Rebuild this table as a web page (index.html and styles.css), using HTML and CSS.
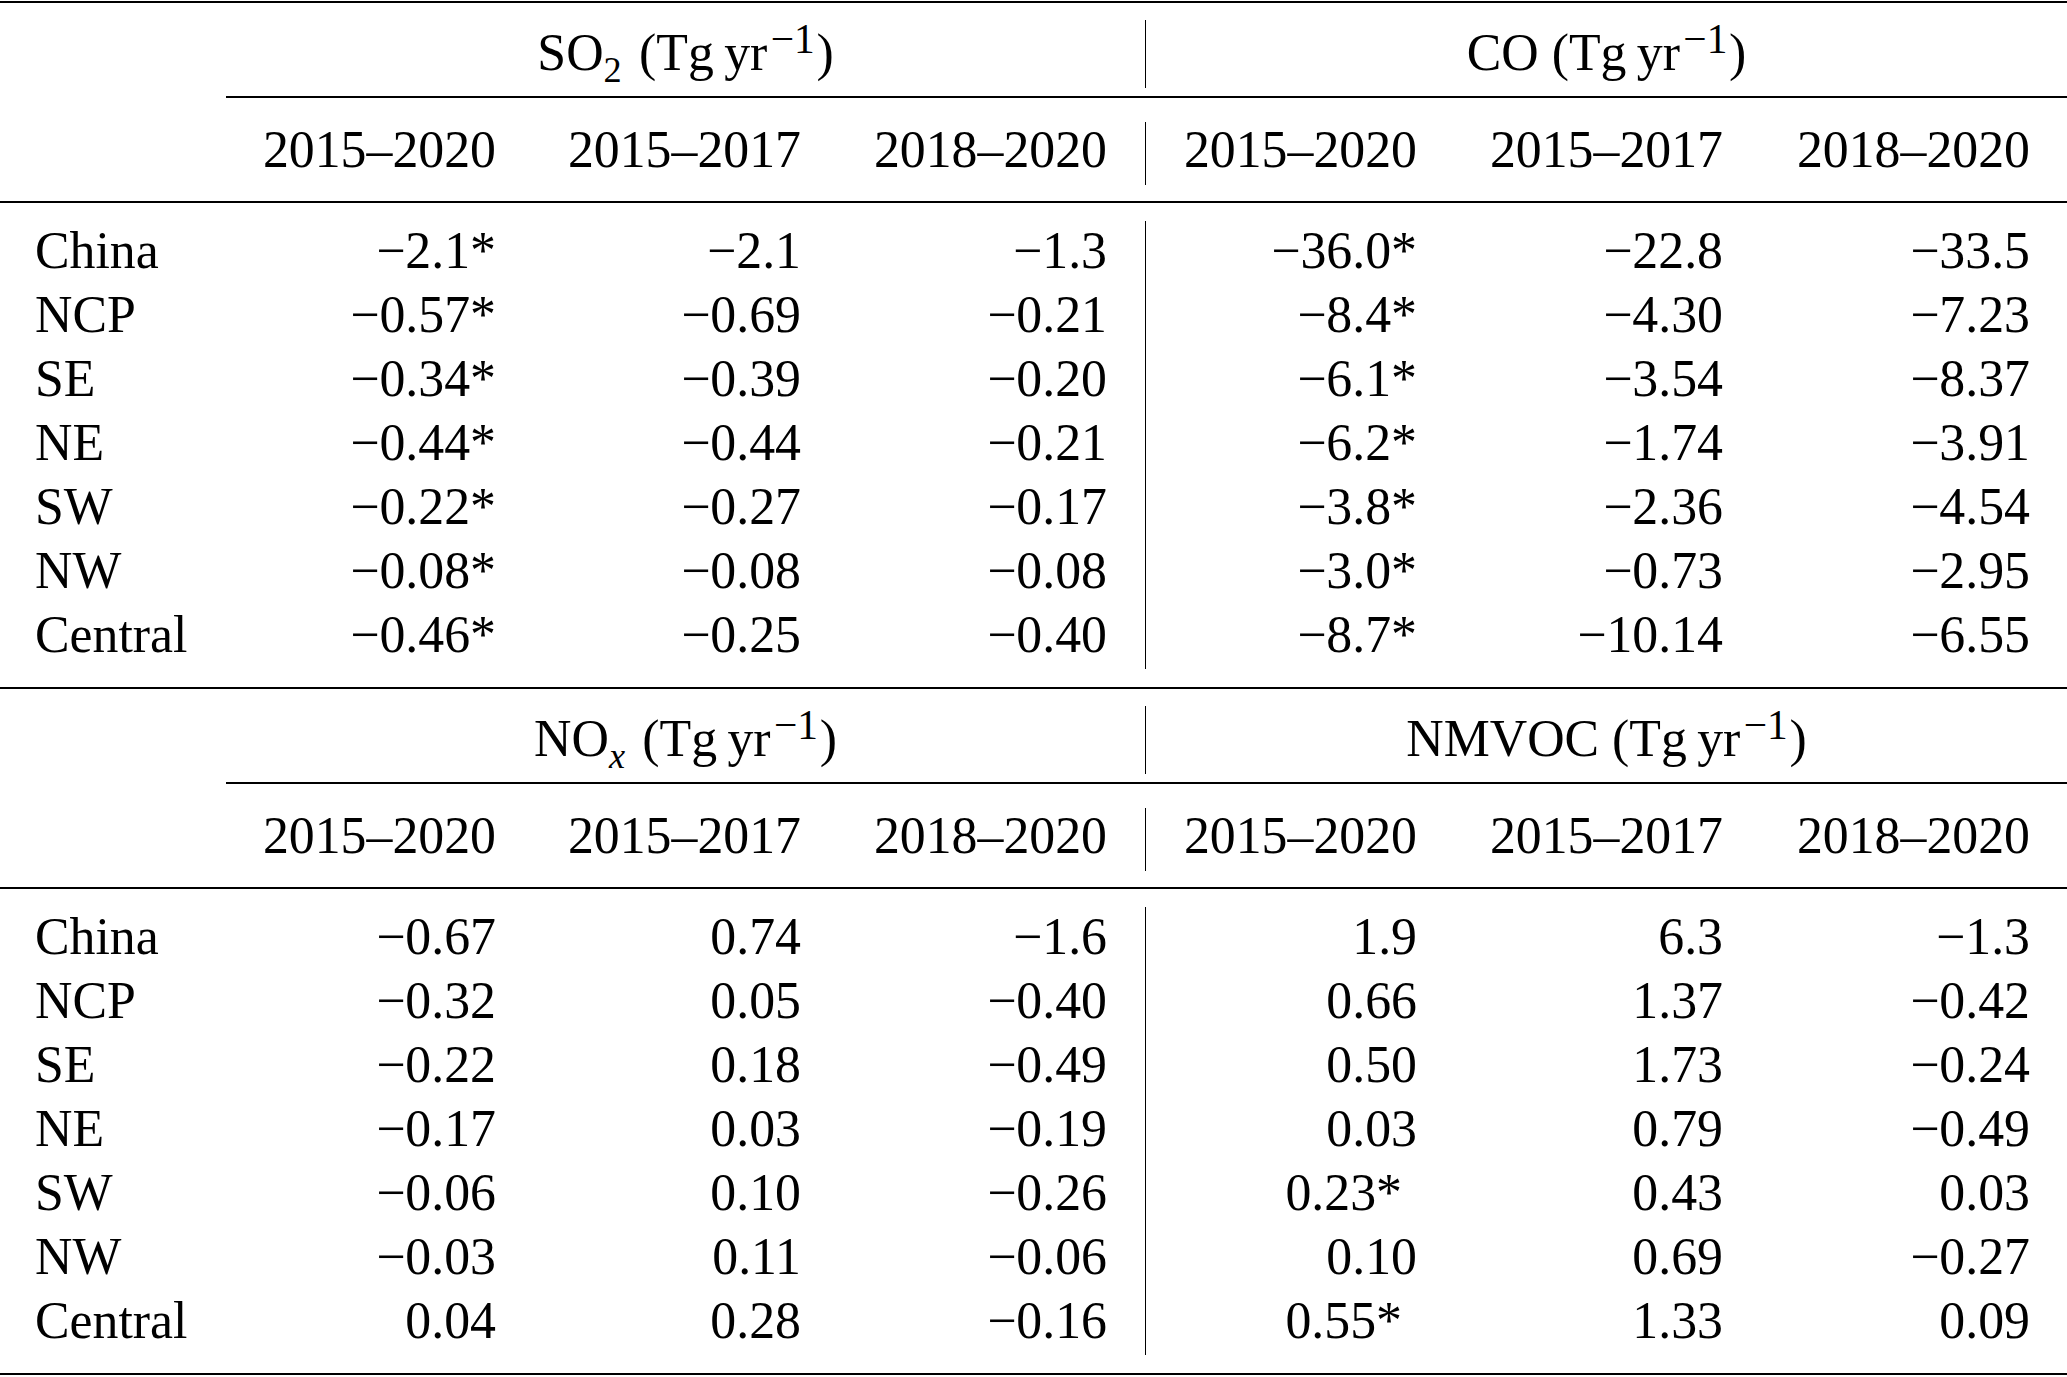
FILE: index.html
```html
<!DOCTYPE html>
<html lang="en">
<head>
<meta charset="utf-8">
<title>Emission trends table</title>
<link rel="stylesheet" href="styles.css">
</head>
<body>
<div class="table">
  <div class="rule"></div>

  <div class="grid head1">
    <div class="lab"></div>
    <div class="span-a">SO<sub>2</sub> (Tg&thinsp;yr<sup>−1</sup>)</div>
    <div class="span-b">CO (Tg&thinsp;yr<sup>−1</sup>)</div>
  </div>
  <div class="rule partial"></div>
  <div class="grid head2">
    <div class="lab"></div>
    <div class="c">2015–2020</div><div class="c">2015–2017</div><div class="c c3">2018–2020</div>
    <div class="c c4">2015–2020</div><div class="c">2015–2017</div><div class="c">2018–2020</div>
  </div>
  <div class="rule mid"></div>
  <div class="body">
    <div class="grid row"><div class="lab">China</div><div class="c">−2.1*</div><div class="c">−2.1</div><div class="c c3">−1.3</div><div class="c c4">−36.0*</div><div class="c">−22.8</div><div class="c">−33.5</div></div>
    <div class="grid row"><div class="lab">NCP</div><div class="c">−0.57*</div><div class="c">−0.69</div><div class="c c3">−0.21</div><div class="c c4">−8.4*</div><div class="c">−4.30</div><div class="c">−7.23</div></div>
    <div class="grid row"><div class="lab">SE</div><div class="c">−0.34*</div><div class="c">−0.39</div><div class="c c3">−0.20</div><div class="c c4">−6.1*</div><div class="c">−3.54</div><div class="c">−8.37</div></div>
    <div class="grid row"><div class="lab">NE</div><div class="c">−0.44*</div><div class="c">−0.44</div><div class="c c3">−0.21</div><div class="c c4">−6.2*</div><div class="c">−1.74</div><div class="c">−3.91</div></div>
    <div class="grid row"><div class="lab">SW</div><div class="c">−0.22*</div><div class="c">−0.27</div><div class="c c3">−0.17</div><div class="c c4">−3.8*</div><div class="c">−2.36</div><div class="c">−4.54</div></div>
    <div class="grid row"><div class="lab">NW</div><div class="c">−0.08*</div><div class="c">−0.08</div><div class="c c3">−0.08</div><div class="c c4">−3.0*</div><div class="c">−0.73</div><div class="c">−2.95</div></div>
    <div class="grid row"><div class="lab">Central</div><div class="c">−0.46*</div><div class="c">−0.25</div><div class="c c3">−0.40</div><div class="c c4">−8.7*</div><div class="c">−10.14</div><div class="c">−6.55</div></div>
  </div>
  <div class="rule end"></div>

  <div class="grid head1">
    <div class="lab"></div>
    <div class="span-a">NO<sub><i>x</i></sub> (Tg&thinsp;yr<sup>−1</sup>)</div>
    <div class="span-b">NMVOC (Tg&thinsp;yr<sup>−1</sup>)</div>
  </div>
  <div class="rule partial"></div>
  <div class="grid head2">
    <div class="lab"></div>
    <div class="c">2015–2020</div><div class="c">2015–2017</div><div class="c c3">2018–2020</div>
    <div class="c c4">2015–2020</div><div class="c">2015–2017</div><div class="c">2018–2020</div>
  </div>
  <div class="rule mid"></div>
  <div class="body">
    <div class="grid row"><div class="lab">China</div><div class="c">−0.67</div><div class="c">0.74</div><div class="c c3">−1.6</div><div class="c c4">1.9</div><div class="c">6.3</div><div class="c">−1.3</div></div>
    <div class="grid row"><div class="lab">NCP</div><div class="c">−0.32</div><div class="c">0.05</div><div class="c c3">−0.40</div><div class="c c4">0.66</div><div class="c">1.37</div><div class="c">−0.42</div></div>
    <div class="grid row"><div class="lab">SE</div><div class="c">−0.22</div><div class="c">0.18</div><div class="c c3">−0.49</div><div class="c c4">0.50</div><div class="c">1.73</div><div class="c">−0.24</div></div>
    <div class="grid row"><div class="lab">NE</div><div class="c">−0.17</div><div class="c">0.03</div><div class="c c3">−0.19</div><div class="c c4">0.03</div><div class="c">0.79</div><div class="c">−0.49</div></div>
    <div class="grid row"><div class="lab">SW</div><div class="c">−0.06</div><div class="c">0.10</div><div class="c c3">−0.26</div><div class="c c4 star">0.23*</div><div class="c">0.43</div><div class="c">0.03</div></div>
    <div class="grid row"><div class="lab">NW</div><div class="c">−0.03</div><div class="c">0.11</div><div class="c c3">−0.06</div><div class="c c4">0.10</div><div class="c">0.69</div><div class="c">−0.27</div></div>
    <div class="grid row"><div class="lab">Central</div><div class="c">0.04</div><div class="c">0.28</div><div class="c c3">−0.16</div><div class="c c4 star">0.55*</div><div class="c">1.33</div><div class="c">0.09</div></div>
  </div>
  <div class="rule end"></div>
</div>
</body>
</html>
```

FILE: styles.css
```css
html, body {
  margin: 0;
  padding: 0;
  background: #ffffff;
}

body {
  font-family: "Liberation Serif", "Times New Roman", serif;
  font-size: 51.8px;
  color: #000000;
}

.table {
  width: 2067px;
  padding-top: 1px;
}

.rule {
  height: 2px;
  background: #000000;
}

.rule.partial {
  margin-left: 226px;
  margin-top: 8px;
}

.rule.mid {
  margin-top: 16px;
}

.rule.end {
  margin-top: 18px;
}

.grid {
  display: grid;
  grid-template-columns: 226px 307px 305px 307px 309px 306px 307px;
}

.grid > div {
  box-sizing: border-box;
  white-space: nowrap;
}

.head1 {
  margin-top: 17px;
  height: 68px;
  line-height: 59px;
}

.head1 > div {
  padding-top: 3px;
  height: 68px;
  text-align: center;
}

.span-a {
  grid-column: 2 / 5;
}

.span-b {
  grid-column: 5 / 8;
  border-left: 1.5px solid #000000;
}

.head2 {
  margin-top: 24px;
  height: 63px;
  line-height: 55px;
}

.head2 > div {
  height: 63px;
}

.body {
  margin-top: 18px;
}

.row {
  height: 64px;
  line-height: 59px;
}

.row > div {
  height: 64px;
}

.lab {
  padding-left: 35px;
  text-align: left;
}

.c {
  text-align: right;
  padding-right: 37px;
}

.c3 {
  padding-right: 38px;
}

.c4 {
  border-left: 1.5px solid #000000;
}

.star {
  padding-right: 52px;
}

sub, sup {
  line-height: 0;
}

sup {
  font-size: 0.8em;
  vertical-align: 0.42em;
  margin-left: 0.08em;
  margin-right: 0.04em;
}

sub {
  font-size: 0.7em;
  vertical-align: -0.33em;
  margin-right: 0.12em;
}

sub i {
  font-style: italic;
}
```
